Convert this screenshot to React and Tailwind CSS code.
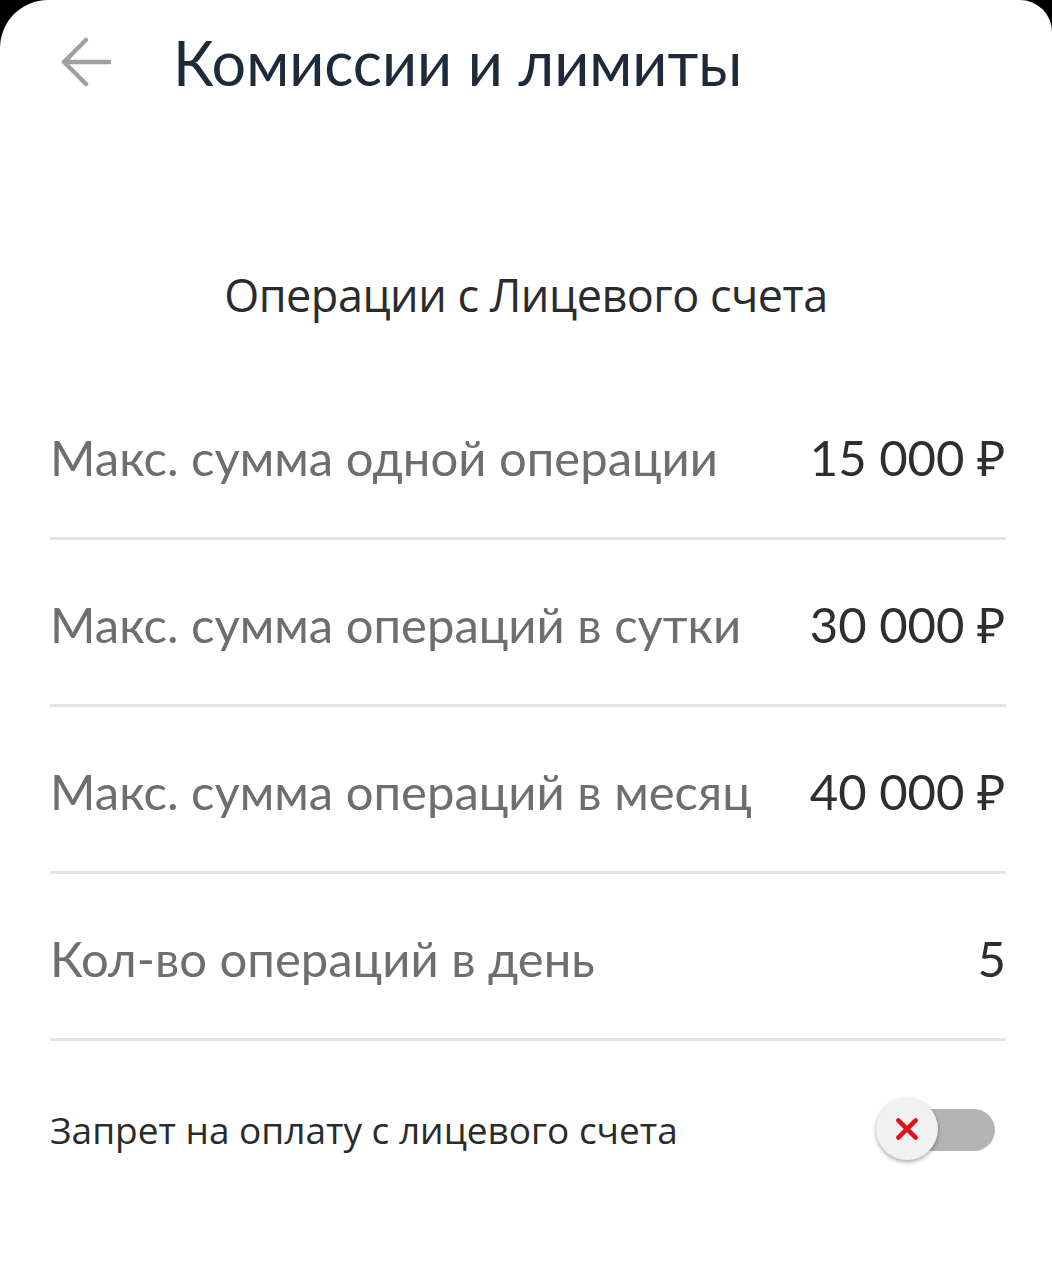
const limits = [
  { label: "Макс. сумма одной операции", value: "15 000 ₽" },
  { label: "Макс. сумма операций в сутки", value: "30 000 ₽" },
  { label: "Макс. сумма операций в месяц", value: "40 000 ₽" },
  { label: "Кол-во операций в день", value: "5" },
];

export default function App() {
  return (
    <div className="min-h-[1280px] bg-black">
      <div className="min-h-[1280px] rounded-tl-[48px] rounded-tr-[32px] bg-white">
        <header className="flex h-[130px] items-center pb-[6px]">
          <div className="flex w-[173px] justify-start pl-[61px]">
            <svg viewBox="0 0 50 50" className="h-[50px] w-[50px]" fill="none">
              <path
                d="M25 3L3 25L25 47M3 25H49"
                stroke="#a0a0a0"
                strokeWidth="4.5"
                strokeLinecap="round"
                strokeLinejoin="round"
              />
            </svg>
          </div>
          <h1 className="font-['Lato',sans-serif] text-[61px] leading-none text-[#1c2a3a]">
            Комиссии и лимиты
          </h1>
        </header>

        <h2 className="mt-[130px] text-center font-['Open_Sans',sans-serif] text-[45px] leading-[70px] tracking-[-0.5px] text-[#2b2b2b]">
          Операции с Лицевого счета
        </h2>

        <div className="mt-[43px] pl-[50px] pr-[46px]">
          {limits.map((item) => (
            <div
              key={item.label}
              className="flex h-[167px] items-center justify-between border-b-[3px] border-[#e3e3e3] pt-[5px] font-['Lato',sans-serif] text-[49px]"
            >
              <span className="text-[#6e6e6e]">{item.label}</span>
              <span className="text-[#2e2e2e]">{item.value}</span>
            </div>
          ))}

          <div className="flex h-[178px] items-center justify-between">
            <span className="font-['Open_Sans',sans-serif] text-[37px] text-[#2b2b2b]">
              Запрет на оплату с лицевого счета
            </span>
            <Toggle />
          </div>
        </div>
      </div>
    </div>
  );
}

function Toggle() {
  return (
    <div className="relative mr-[11px] h-[42px] w-[94px] rounded-full bg-[#b4b4b4]">
      <div className="absolute left-[-25px] top-[-11px] flex h-[62px] w-[62px] items-center justify-center rounded-full bg-[#f1f1f1] shadow-[0_2px_4px_rgba(0,0,0,0.35)]">
        <svg viewBox="0 0 24 24" className="h-[26px] w-[26px]">
          <path d="M4 4L20 20M20 4L4 20" stroke="#e0101e" strokeWidth="4.2" strokeLinecap="round" />
        </svg>
      </div>
    </div>
  );
}
